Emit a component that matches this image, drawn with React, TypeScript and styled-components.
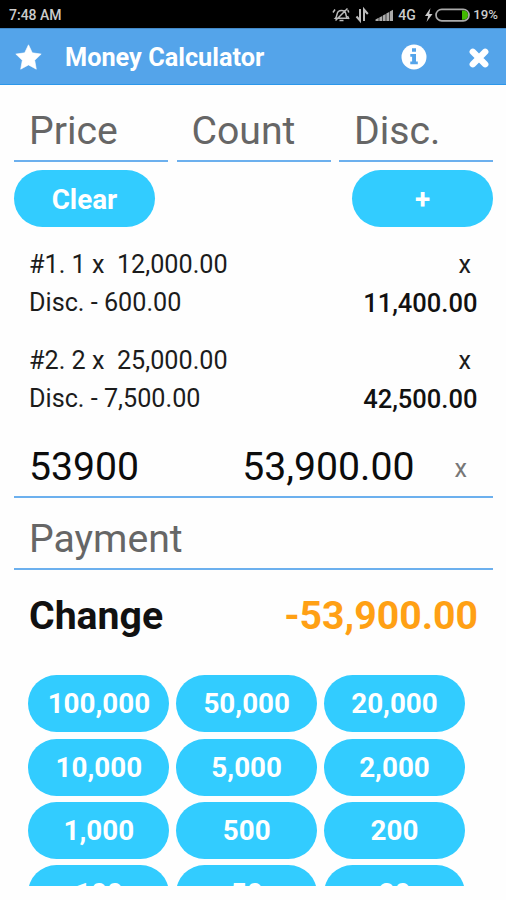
import React from "react";
import styled, { createGlobalStyle } from "styled-components";

const GlobalStyle = createGlobalStyle`
  * { box-sizing: border-box; }
  body { margin: 0; background: #fff; font-family: Roboto, "Liberation Sans", sans-serif; }
`;

const Screen = styled.div`
  width: 506px;
  height: 900px;
  overflow: hidden;
  background: #fefefe;
  color: #111;
`;

const StatusBar = styled.div`
  display: flex;
  align-items: center;
  justify-content: space-between;
  height: 28px;
  padding: 2px 8px 0 9px;
  background: #000;
  color: #ccc;
  font-size: 14px;
  font-weight: 500;
  line-height: 26px;
`;

const StatusIcons = styled.div`
  display: flex;
  align-items: center;
  svg { display: block; }
`;

const StatusText = styled.span<{ $left?: number; $right?: number; $size?: number }>`
  margin-left: ${(p) => p.$left ?? 0}px;
  margin-right: ${(p) => p.$right ?? 0}px;
  font-size: ${(p) => p.$size ?? 14}px;
`;

const Header = styled.header`
  display: flex;
  align-items: center;
  height: 57px;
  padding: 1px 17px 0 15px;
  background: #54a4ea;
  border-top: 1px solid #4288c6;
  border-bottom: 1px solid #2c97ea;
  color: #fff;
  svg { display: block; }
`;

const Title = styled.h1`
  flex: 1;
  margin: 2px 0 0 23px;
  font-size: 25.3px;
  font-weight: 700;
  line-height: 30px;
`;

const HeaderIcon = styled.span<{ $gap?: number; $drop?: number }>`
  margin-top: ${(p) => p.$drop ?? 0}px;
  margin-right: ${(p) => p.$gap ?? 0}px;
`;

const Content = styled.main`
  padding: 17px 13px 0 14px;
`;

const Fields = styled.div`
  display: grid;
  grid-template-columns: repeat(3, 1fr);
  column-gap: 8.5px;
`;

const Field = styled.div<{ $height: number; $filled?: boolean; $drop?: number }>`
  display: flex;
  align-items: center;
  height: ${(p) => p.$height}px;
  padding: ${(p) => p.$drop ?? 0}px 15px 0;
  border-bottom: 2px solid #6cb0ee;
  color: ${(p) => (p.$filled ? "#0c0c0c" : "#666")};
  font-size: 39.2px;
  line-height: 56px;
`;

const FieldValue = styled.span`
  margin-left: auto;
`;

const ClearMark = styled.span`
  margin: 3px 11px 0 40px;
  color: #777;
  font-size: 25.2px;
`;

const Actions = styled.div`
  display: flex;
  justify-content: space-between;
  margin-top: 8px;
`;

const Pill = styled.button`
  width: 141px;
  height: 57px;
  padding: 0;
  border: 0;
  border-radius: 29px;
  background: #32ccff;
  color: #fff;
  font-family: inherit;
  font-size: 27.8px;
  font-weight: 700;
  line-height: 57px;
`;

const ActionPill = styled(Pill)`
  padding-top: 1px;
`;

const Items = styled.div`
  padding: 19px 15px 0 15px;
`;

const Item = styled.div`
  margin-bottom: 19.5px;
`;

const ItemRow = styled.div`
  display: flex;
  justify-content: space-between;
  height: 38px;
  color: #1c1c1c;
  font-size: 25.2px;
  line-height: 38px;
  white-space: pre;
`;

const Remove = styled.span`
  margin-right: 7px;
`;

const Amount = styled.span`
  margin-right: 0.6px;
  font-size: 25.5px;
  font-weight: 500;
  color: #111;
`;

const ChangeRow = styled.div`
  display: flex;
  justify-content: space-between;
  padding: 18px 15px 0;
  font-size: 39.2px;
  font-weight: 700;
  line-height: 56px;
`;

const Negative = styled.span`
  color: #ffa014;
`;

const NoteGrid = styled.div`
  display: grid;
  grid-template-columns: repeat(3, 141px);
  gap: 6.4px 6.8px;
  height: 211px;
  margin: 31.3px 0 0 14.4px;
  overflow: hidden;
`;

const items = [
  { label: "#1. 1 x  12,000.00", discount: "Disc. - 600.00", total: "11,400.00" },
  { label: "#2. 2 x  25,000.00", discount: "Disc. - 7,500.00", total: "42,500.00" },
];

const notes = [
  "100,000", "50,000", "20,000",
  "10,000", "5,000", "2,000",
  "1,000", "500", "200",
  "100", "50", "20",
];

const StatusGlyphs = () => (
  <svg width="64" height="20" viewBox="0 0 64 20" fill="none" stroke="#bbb" strokeWidth="1.5">
    <path d="M3.500 13.200c1.600-1.500 1-5 2.800-6.700 1.700-1.500 4.700-1.500 6.400 0 1.800 1.700 1 5.200 2.600 6.700zM7.500 15.500h4M15.500 3.500L3.500 15.500" />
    <path d="M1 7.500l2-3M16.800 7.500l-1-2.500M15.500 11l1.500 3" />
    <path d="M28 4v11.500l-3.500-4M32 16V4.500l3.800 4.500" strokeWidth="2" />
    <g fill="#aaa" stroke="none">
      <path d="M43.500 16v-1.500l3.200-1.800V16zM47.300 16v-3.600l2.900-1.500V16zM50.800 16v-5.400l2.900-1.600V16zM54.300 16V8.600l2.900-1.600v9zM57.800 16V6.600l3.200-1.800V16z" />
    </g>
  </svg>
);

const BatteryGlyphs = () => (
  <svg width="46" height="20" viewBox="0 0 46 20">
    <path d="M6.500 3L1 11h3.200L2.500 17 8.500 9H5.200z" fill="#ccc" />
    <rect x="12" y="4.300" width="33" height="11.600" rx="5.800" fill="#000" stroke="#aaa" strokeWidth="1.700" />
    <path d="M38 5.500h1.500a4.600 4.600 0 0 1 0 9.200H38z" fill="#42b900" />
  </svg>
);

const StarIcon = () => (
  <svg width="27" height="26" viewBox="0 0 27 26" fill="#fff">
    <path
      d="M13.500.8l3.800 8 8.900 1.300-6.500 6.200 1.600 8.900-7.800-4.300-7.800 4.300 1.600-8.900L.8 10.100l8.900-1.300z"
      stroke="#fff"
      strokeWidth=".6"
      strokeLinejoin="round"
    />
  </svg>
);

const InfoIcon = () => (
  <svg width="26" height="26" viewBox="0 0 26 26">
    <circle cx="13" cy="13" r="12.500" fill="#fff" />
    <path d="M11 4.200h4v3.600h-4zM9.300 10h5.700v7.400h1.800v2.800H9.300v-2.800h1.800v-4.600H9.300z" fill="#54a4ea" />
  </svg>
);

const CloseIcon = () => (
  <svg width="20" height="20" viewBox="0 0 20 20" fill="none">
    <path d="M3.800 3.800l12.400 12.400M16.200 3.800L3.800 16.200" stroke="#fff" strokeWidth="6.400" strokeLinecap="round" />
  </svg>
);

export default function App() {
  return (
    <>
      <GlobalStyle />
      <Screen>
        <StatusBar>
          <StatusText>7:48 AM</StatusText>
          <StatusIcons>
            <StatusGlyphs />
            <StatusText $left={2} $right={8}>4G</StatusText>
            <BatteryGlyphs />
            <StatusText $left={3.5} $size={13.2}>19%</StatusText>
          </StatusIcons>
        </StatusBar>
        <Header>
          <HeaderIcon><StarIcon /></HeaderIcon>
          <Title>Money Calculator</Title>
          <HeaderIcon $gap={42}><InfoIcon /></HeaderIcon>
          <HeaderIcon $drop={2}><CloseIcon /></HeaderIcon>
        </Header>
        <Content>
          <Fields>
            <Field $height={60}>Price</Field>
            <Field $height={60}>Count</Field>
            <Field $height={60}>Disc.</Field>
          </Fields>
          <Actions>
            <ActionPill>Clear</ActionPill>
            <ActionPill>+</ActionPill>
          </Actions>
          <Items>
            {items.map((item) => (
              <Item key={item.label}>
                <ItemRow>
                  <span>{item.label}</span>
                  <Remove>x</Remove>
                </ItemRow>
                <ItemRow>
                  <span>{item.discount}</span>
                  <Amount>{item.total}</Amount>
                </ItemRow>
              </Item>
            ))}
          </Items>
          <Field $height={61} $filled $drop={1}>
            <span>53900</span>
            <FieldValue>53,900.00</FieldValue>
            <ClearMark>x</ClearMark>
          </Field>
          <Field $height={72} $drop={11}>Payment</Field>
          <ChangeRow>
            <span>Change</span>
            <Negative>-53,900.00</Negative>
          </ChangeRow>
          <NoteGrid>
            {notes.map((note) => (
              <Pill key={note}>{note}</Pill>
            ))}
          </NoteGrid>
        </Content>
      </Screen>
    </>
  );
}
